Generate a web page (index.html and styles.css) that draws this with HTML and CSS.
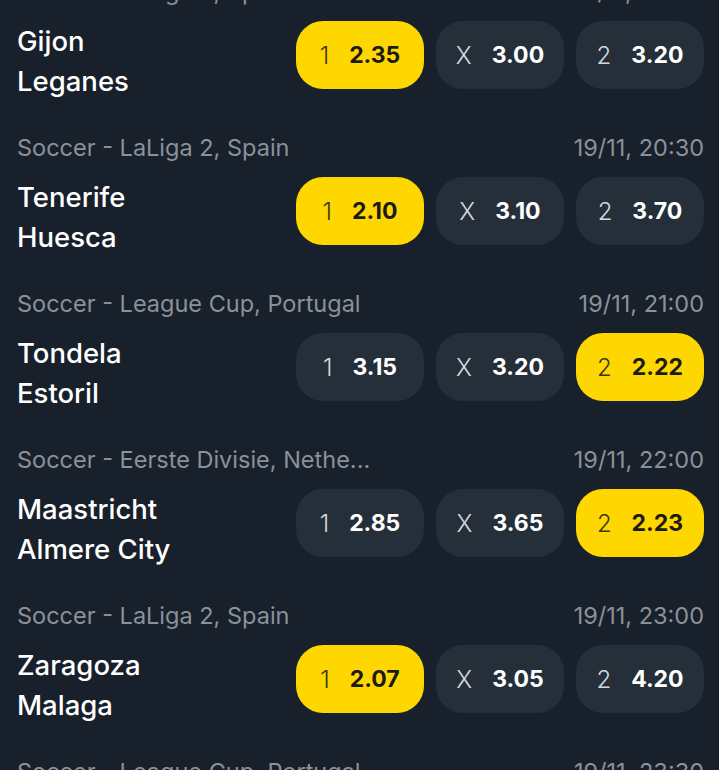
FILE: index.html
```html
<!DOCTYPE html>
<html lang="en">
<head>
<meta charset="UTF-8" />
<meta name="viewport" content="width=device-width, initial-scale=1.0" />
<title>Soccer odds</title>
<link rel="stylesheet" href="styles.css">
</head>
<body>

<div class="list">
  <div class="match">
    <div class="meta"><span>Soccer - LaLiga 2, Spain</span><span>19/11, 20:00</span></div>
    <div class="row">
      <div class="teams"><div>Gijon</div><div>Leganes</div></div>
      <div class="odds">
        <div class="odd pick"><span class="lbl">1</span><span class="val">2.35</span></div>
        <div class="odd"><span class="lbl">X</span><span class="val">3.00</span></div>
        <div class="odd"><span class="lbl">2</span><span class="val">3.20</span></div>
      </div>
    </div>
  </div>

  <div class="match">
    <div class="meta"><span>Soccer - LaLiga 2, Spain</span><span>19/11, 20:30</span></div>
    <div class="row">
      <div class="teams"><div>Tenerife</div><div>Huesca</div></div>
      <div class="odds">
        <div class="odd pick"><span class="lbl">1</span><span class="val">2.10</span></div>
        <div class="odd"><span class="lbl">X</span><span class="val">3.10</span></div>
        <div class="odd"><span class="lbl">2</span><span class="val">3.70</span></div>
      </div>
    </div>
  </div>

  <div class="match">
    <div class="meta"><span>Soccer - League Cup, Portugal</span><span>19/11, 21:00</span></div>
    <div class="row">
      <div class="teams"><div>Tondela</div><div>Estoril</div></div>
      <div class="odds">
        <div class="odd"><span class="lbl">1</span><span class="val">3.15</span></div>
        <div class="odd"><span class="lbl">X</span><span class="val">3.20</span></div>
        <div class="odd pick"><span class="lbl">2</span><span class="val">2.22</span></div>
      </div>
    </div>
  </div>

  <div class="match">
    <div class="meta"><span>Soccer - Eerste Divisie, Nethe...</span><span>19/11, 22:00</span></div>
    <div class="row">
      <div class="teams"><div>Maastricht</div><div>Almere City</div></div>
      <div class="odds">
        <div class="odd"><span class="lbl">1</span><span class="val">2.85</span></div>
        <div class="odd"><span class="lbl">X</span><span class="val">3.65</span></div>
        <div class="odd pick"><span class="lbl">2</span><span class="val">2.23</span></div>
      </div>
    </div>
  </div>

  <div class="match">
    <div class="meta"><span>Soccer - LaLiga 2, Spain</span><span>19/11, 23:00</span></div>
    <div class="row">
      <div class="teams"><div>Zaragoza</div><div>Malaga</div></div>
      <div class="odds">
        <div class="odd pick"><span class="lbl">1</span><span class="val">2.07</span></div>
        <div class="odd"><span class="lbl">X</span><span class="val">3.05</span></div>
        <div class="odd"><span class="lbl">2</span><span class="val">4.20</span></div>
      </div>
    </div>
  </div>

  <div class="match">
    <div class="meta"><span>Soccer - League Cup, Portugal</span><span>19/11, 23:30</span></div>
  </div>
</div>

</body>
</html>
```

FILE: styles.css
```css
html, body { margin: 0; background: #18202b; overflow: hidden; }
body { font-family: Inter, Roboto, sans-serif; color: #fff; }
.list { margin-top: -23px; padding: 0 15px 0 17px; }
.match { padding-bottom: 44px; }
.meta { display: flex; justify-content: space-between; height: 30px; line-height: 30px; font-size: 23.5px; color: #8b9199; margin-bottom: 14px; }
.row { display: flex; align-items: center; justify-content: space-between; height: 68px; }
.teams { font-size: 27.5px; font-weight: 500; line-height: 40px; padding-top: 12px; }
.odds { display: flex; gap: 12px; }
.odd { width: 128px; height: 68px; border-radius: 27px; background: #252f3a; display: flex; align-items: center; justify-content: center; gap: 20px; font-size: 24px; }
.lbl { font-weight: 300; color: #d6d9dc; }
.val { font-size: 23px; font-weight: 700; color: #fff; }
.pick { background: #fed700; }
.pick .lbl { color: #3b3616; }
.pick .val { color: #1b1b14; }
```
